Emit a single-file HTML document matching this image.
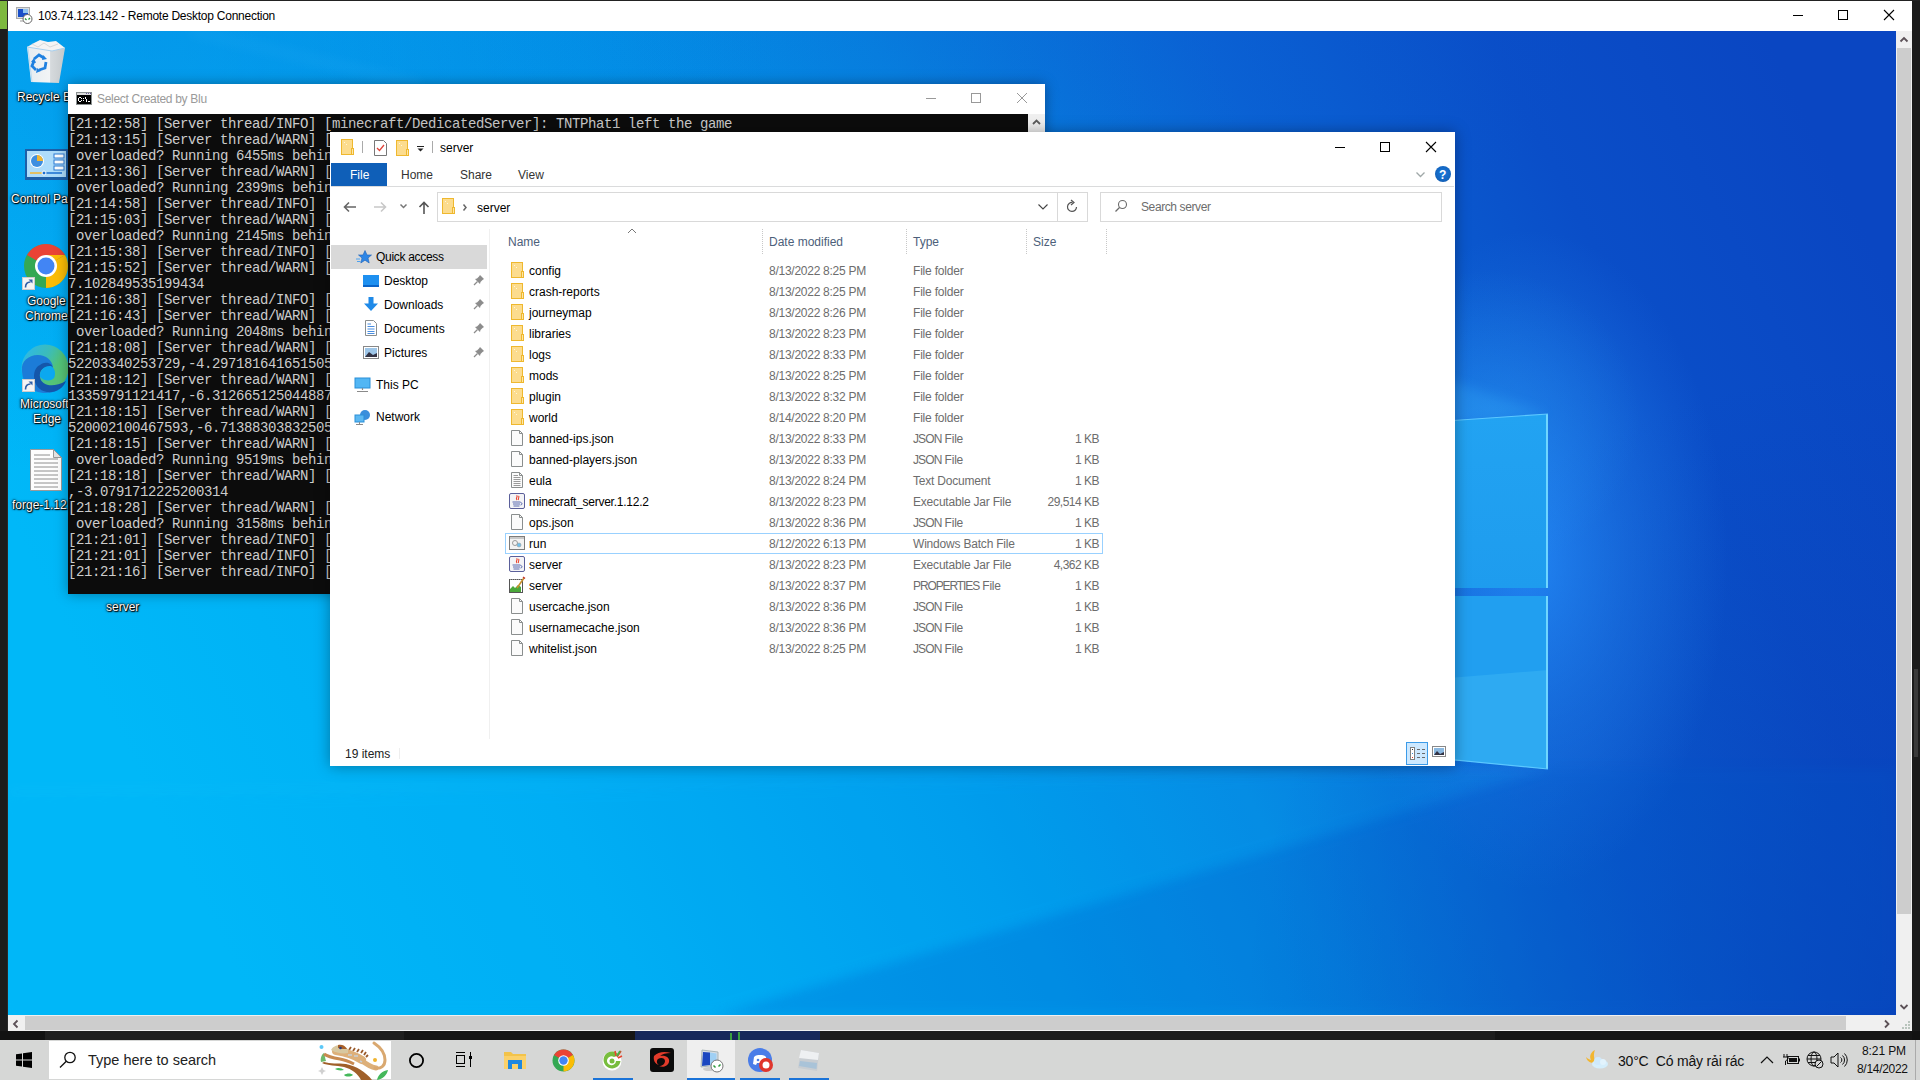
<!DOCTYPE html>
<html><head><meta charset="utf-8"><style>
*{margin:0;padding:0;box-sizing:border-box}
html,body{width:1920px;height:1080px;overflow:hidden}
body{position:relative;background:#1c1c1c;font-family:"Liberation Sans",sans-serif;color:#000}
.a{position:absolute}
.t{position:absolute;white-space:nowrap;line-height:1}
#wall{left:8px;top:31px;width:1888px;height:984px;overflow:hidden;background:#0a6ad8}
.con{font-family:"Liberation Mono",monospace;font-size:14px;letter-spacing:-.4px;color:#cccccc;line-height:16px;white-space:pre}
.row .t{font-size:12px}
.dlab{color:#fff;font-size:12px;text-shadow:1px 1px 1px #000,0 0 1px #000,0 0 2px #000,0 0 3px rgba(0,0,0,.7);text-align:center}

.row{left:0;width:1920px;height:21px}
.row .ic{position:absolute;left:511px;top:2px;overflow:visible}
.row .t{top:1px;line-height:21px;font-size:12px}
.row .nm{left:529px;color:#000}
.row .dt{left:769px;color:#6d6d6d;letter-spacing:-.26px}
.row .ty{left:913px;color:#6d6d6d;letter-spacing:-.2px}
.row .sz{left:1000px;width:99px;text-align:right;color:#6d6d6d;letter-spacing:-.5px}
</style></head><body>
<svg width="0" height="0" style="position:absolute">
<defs>
<g id="i-folder"><rect x="0.5" y="0.5" width="11" height="15" fill="#fcdc8e" stroke="#efb82e"/><rect x="10" y="9" width="3" height="7" fill="#efb82e"/><rect x="11" y="10" width="1" height="5" fill="#fde6a8"/><rect x="3" y="3" width="1" height="1" fill="#fff6d8"/><rect x="5" y="5" width="1" height="1" fill="#fff6d8"/></g>
<g id="i-file"><path d="M0.5 0.5H8.5L11.5 3.5V15.5H0.5Z" fill="#fbfbfb" stroke="#8a8e8e"/><path d="M8.5 0.5V3.5H11.5" fill="none" stroke="#8a8e8e"/></g>
<g id="i-txt"><path d="M0.5 0.5H8.5L11.5 3.5V15.5H0.5Z" fill="#fbfbfb" stroke="#8a8e8e"/><path d="M8.5 0.5V3.5H11.5" fill="none" stroke="#8a8e8e"/><path d="M2.5 3.5H7M2.5 5.5H9.5M2.5 7.5H9.5M2.5 9.5H9.5M2.5 11.5H9.5M2.5 13.5H9.5" stroke="#9a9a9a" stroke-width="1"/></g>
<g id="i-jar"><rect x="-1.5" y="0.5" width="15" height="15" rx="1.5" fill="#f4f4f6" stroke="#5a5f9a"/><path d="M5.5 2.5C7.5 3.5 4 5 6 7M7.5 3C9 4 6.5 5.5 7.5 7" stroke="#e8412c" fill="none" stroke-width="1.1"/><path d="M1.5 9H9.5M2 11H9M2.5 13H8.5M9.5 9.5C11.5 9.5 11.5 12 9.5 12" stroke="#5b6ab0" fill="none" stroke-width="1"/></g>
<g id="i-bat"><rect x="-1.5" y="1.5" width="15" height="13" fill="#f2f2f2" stroke="#7c7c7c"/><rect x="-1" y="2" width="14" height="2" fill="#c9c9c9"/><circle cx="4" cy="8" r="2.5" fill="none" stroke="#9a9a9a"/><circle cx="8" cy="10" r="2" fill="#6ec1ee" stroke="#9a9a9a" stroke-width=".6"/></g>
<g id="i-prop"><rect x="-1.5" y="2.5" width="13" height="13" fill="#fff" stroke="#555"/><path d="M-1 12L2 9L4 11L7 8L10 10V15H-1Z" fill="#4aa83a"/><path d="M-1 2.5H10" stroke="#999" stroke-dasharray="1 1"/><path d="M6 11L13 1" stroke="#c8902c" stroke-width="1.6"/><path d="M12 0L14 1.5" stroke="#c3342a" stroke-width="1.5"/></g>
</defs></svg>


<!-- host left strip -->
<div class="a" style="left:0;top:0;width:1920px;height:1px;background:#222"></div>
<div class="a" style="left:0;top:1px;width:7px;height:28px;background:#7db83e"></div>
<div class="a" style="left:7px;top:0;width:1px;height:1040px;background:#2a2a2a"></div>

<div class="a" style="left:1914px;top:669px;width:4px;height:88px;background:#3a3a3a"></div>
<!-- RDP title bar -->
<div class="a" style="left:8px;top:1px;width:1904px;height:30px;background:#fff"></div>
<div class="t" id="rdpt" style="left:38px;top:10px;font-size:12px;color:#000;letter-spacing:-.25px">103.74.123.142 - Remote Desktop Connection</div>

<!-- wallpaper -->
<div class="a" id="wall"><svg width="1888" height="984" viewBox="8 31 1888 984" style="position:absolute;left:0;top:0">
<defs>
<linearGradient id="wg" gradientUnits="userSpaceOnUse" x1="300" y1="1100" x2="1900" y2="300">
<stop offset="0" stop-color="#00b8f8"/>
<stop offset=".2" stop-color="#00aef4"/>
<stop offset=".4" stop-color="#009cec"/>
<stop offset=".55" stop-color="#0688e2"/>
<stop offset=".72" stop-color="#0a62d4"/>
<stop offset=".86" stop-color="#0a4ec8"/>
<stop offset="1" stop-color="#0a46c2"/>
</linearGradient>
<radialGradient id="topd" gradientUnits="userSpaceOnUse" cx="900" cy="0" r="700" gradientTransform="translate(900 0) scale(1 .55) translate(-900 0)">
<stop offset="0" stop-color="#0a5ad0" stop-opacity=".28"/>
<stop offset="1" stop-color="#0a5ad0" stop-opacity="0"/>
</radialGradient>
<radialGradient id="glow" gradientUnits="userSpaceOnUse" cx="1530" cy="560" r="330" gradientTransform="translate(1530 560) scale(.6 1) translate(-1530 -560)">
<stop offset="0" stop-color="#2a94ff" stop-opacity=".7"/>
<stop offset=".5" stop-color="#2a88f2" stop-opacity=".35"/>
<stop offset="1" stop-color="#2a86f0" stop-opacity="0"/>
</radialGradient>
<linearGradient id="pane1" x1="0" y1="0" x2="0" y2="1"><stop offset="0" stop-color="#22a3f2"/><stop offset="1" stop-color="#1e9cee"/></linearGradient>
<radialGradient id="brd" gradientUnits="userSpaceOnUse" cx="1896" cy="1015" r="650"><stop offset="0" stop-color="#0838b0" stop-opacity=".6"/><stop offset="1" stop-color="#0838b0" stop-opacity="0"/></radialGradient>
<radialGradient id="glow2" gradientUnits="userSpaceOnUse" cx="1490" cy="420" r="150"><stop offset="0" stop-color="#30b0ff" stop-opacity=".45"/><stop offset="1" stop-color="#30b0ff" stop-opacity="0"/></radialGradient>
<radialGradient id="tld" gradientUnits="userSpaceOnUse" cx="150" cy="31" r="450" gradientTransform="translate(150 31) scale(1.4 1) translate(-150 -31)"><stop offset="0" stop-color="#0a78dc" stop-opacity=".4"/><stop offset="1" stop-color="#0a78dc" stop-opacity="0"/></radialGradient>
<filter id="bl" x="-20%" y="-20%" width="140%" height="140%"><feGaussianBlur stdDeviation="6"/></filter>
</defs>
<rect x="8" y="31" width="1888" height="984" fill="url(#wg)"/>
<rect x="8" y="31" width="1888" height="984" fill="url(#topd)"/>
<rect x="8" y="31" width="1888" height="984" fill="url(#brd)"/>
<rect x="8" y="31" width="1888" height="984" fill="url(#tld)"/>
<path d="M190 31L420 84" stroke="#60c8ff" stroke-width="6" opacity=".12" filter="url(#bl)"/>
<rect x="8" y="31" width="1888" height="984" fill="url(#glow)"/>
<polygon points="1548,769 715,1015 1896,1015 1896,769" fill="#0058c8" opacity=".22" filter="url(#bl)"/>
<polygon points="1548,769 8,800 8,1015 715,1015" fill="#00b0f8" opacity=".12" filter="url(#bl)"/>
<path d="M1548 771L8 792" stroke="#70d8ff" stroke-width="3" opacity=".12" filter="url(#bl)"/>

<polygon points="1548,414 1300,330 1300,440" fill="#40c0ff" opacity=".22" filter="url(#bl)"/><rect x="1300" y="250" width="400" height="350" fill="url(#glow2)" opacity=".6"/>
<polygon points="1300,431 1548,414 1548,588 1300,588" fill="url(#pane1)"/>
<polygon points="1300,596 1548,596 1548,769 1300,745" fill="#219ff0"/>
<polygon points="1300,690 1548,670 1548,769 1300,745" fill="#2eaaf2"/>
<path d="M1547 414V588M1547 596V769" stroke="#6fd6ff" stroke-width="2"/><path d="M1300 431L1548 414" stroke="#5cc8ff" stroke-width="1.2"/><path d="M1300 745L1548 769" stroke="#5cc8ff" stroke-width="1.2"/>
</svg></div>
<!-- RDP title icon & buttons -->
<svg class="a" style="left:16px;top:7px" width="17" height="17">
 <rect x=".5" y=".5" width="13" height="11" fill="#d8dde2" stroke="#aaa"/>
 <rect x="2" y="2" width="10" height="8" fill="#1a4fc8"/><rect x="7" y="2" width="5" height="4" fill="#8fc4f0"/>
 <path d="M4 14H10" stroke="#bbb" stroke-width="1.5"/>
 <circle cx="11.5" cy="12" r="4.5" fill="#fff" stroke="#666"/>
 <path d="M9 11.5L10.5 13M14 11L12.5 12.5" stroke="#2a9a3a" stroke-width="1.3"/>
</svg>
<div class="a" style="left:1793px;top:15px;width:10px;height:1px;background:#000"></div>
<div class="a" style="left:1838px;top:10px;width:10px;height:10px;border:1px solid #000"></div>
<svg class="a" style="left:1883px;top:9px" width="12" height="12"><path d="M1 1L11 11M11 1L1 11" stroke="#000" stroke-width="1.1"/></svg>





<!-- desktop icons -->
<svg class="a" style="left:24px;top:38px" width="44" height="48">
 <defs><linearGradient id="rb" x1="0" x2="1"><stop offset="0" stop-color="#e6ecf0"/><stop offset=".6" stop-color="#f2f4f6"/><stop offset=".62" stop-color="#d6dadd"/><stop offset="1" stop-color="#c4c9cc"/></linearGradient></defs>
 <path d="M3 9L41 10L35 45L7 44Z" fill="url(#rb)"/>
 <path d="M3 9L10 5L16 2L24 4L32 3L41 10L28 13Z" fill="#f4f4f4"/>
 <path d="M8 6L14 9L20 5L26 9L34 6" stroke="#d8d8d8" fill="none"/>
 <path d="M3 9L28 13L41 10" stroke="#a8d0ee" fill="none" stroke-width="1"/>
 <path d="M4 10L8 44" stroke="#b0d4f0" stroke-width="1" opacity=".8"/>
 <g fill="none" stroke="#1f80e0" stroke-width="2.8" stroke-linecap="butt">
  <path d="M10 21L15 17L20 20"/>
  <path d="M22 24L21 30L15 32"/>
  <path d="M12 32L8 28L10 23"/>
 </g>
 <path d="M19 17L23 21L18 22Z M17 33L12 35L13 30Z M7 24L10 20L12 25Z" fill="#1f80e0"/>
</svg>
<div class="t dlab" style="left:17px;top:91px">Recycle Bin</div>
<svg class="a" style="left:25px;top:149px" width="43" height="31">
 <rect x="0" y="0" width="43" height="31" fill="#1d5fa8"/>
 <rect x="2" y="2" width="39" height="26" fill="#aedcfa"/>
 <circle cx="12" cy="12" r="7" fill="#fff"/><circle cx="12" cy="12" r="6" fill="#3f8fe0"/>
 <path d="M12 12V6A6 6 0 0 1 18 12Z" fill="#f2b632"/>
 <rect x="29" y="5" width="10" height="4" fill="#fff" stroke="#2a7ad4"/><rect x="29" y="11" width="10" height="4" fill="#fff" stroke="#2a7ad4"/><rect x="29" y="17" width="10" height="4" fill="#fff" stroke="#2a7ad4"/>
 <path d="M5 24H18" stroke="#f2b632" stroke-width="1.5"/><path d="M19 24H37" stroke="#1a6fd0" stroke-width="1.5"/><circle cx="19" cy="24" r="2" fill="#1a6fd0" stroke="#fff"/>
</svg>
<div class="t dlab" style="left:11px;top:193px">Control Panel</div>
<svg class="a" style="left:23px;top:243px" width="46" height="46">
 <circle cx="23" cy="23" r="22" fill="#34a853"/>
 <path d="M23 23L4 12A22 22 0 0 1 42 12Z" fill="#ea4335"/>
 <path d="M23 23L42 12A22 22 0 0 1 23 45Z" fill="#fbbc05"/>
 <path d="M23 23L42 12H23Z" fill="#fbbc05"/>
 <circle cx="23" cy="23" r="11" fill="#fff"/><circle cx="23" cy="23" r="8.5" fill="#4285f4"/>
</svg>
<svg class="a" style="left:22px;top:277px" width="13" height="13"><rect x=".5" y=".5" width="12" height="12" fill="#f4f4f4" stroke="#ccc"/><path d="M3.5 10.5C3.5 7 5.5 5 8.5 5" stroke="#2f5fa8" stroke-width="1.6" fill="none"/><path d="M6.5 2.5H10.5V6.5Z" fill="#2f5fa8"/></svg>
<div class="t dlab" style="left:27px;top:295px">Google</div>
<div class="t dlab" style="left:25px;top:310px">Chrome</div>
<svg class="a" style="left:18px;top:340px" width="52" height="56">
 <defs><linearGradient id="eg" x1="0" y1="0" x2="1" y2=".6"><stop offset="0" stop-color="#2ab8f2"/><stop offset=".5" stop-color="#3cbcb8"/><stop offset=".75" stop-color="#52c47a"/><stop offset="1" stop-color="#58c474"/></linearGradient></defs>
 <circle cx="27" cy="28" r="23.5" fill="url(#eg)"/>
 <path d="M4 30C3 22 10 15 20 15C28 15 34 20 35 27C28 22 19 25 18 34C17 44 26 51 40 50C31 55 17 54 10 46C6 42 4 36 4 30Z" fill="#1c7cd8"/>
 <path d="M22 25C27 21 34 23 35 28C27 25 21 30 22 37C23 45 34 49 48 41C45 49 37 53 29 52C21 51 16 44 16 36C16 31 18 27 22 25Z" fill="#1456aa"/>
 <path d="M22 37C21 31 26 25 33 26C37 28 38 34 36 38C34 41 27 42 22 37Z" fill="#0ba8f0"/>
</svg>
<svg class="a" style="left:22px;top:379px" width="13" height="13"><rect x=".5" y=".5" width="12" height="12" fill="#f4f4f4" stroke="#ccc"/><path d="M3.5 10.5C3.5 7 5.5 5 8.5 5" stroke="#2f5fa8" stroke-width="1.6" fill="none"/><path d="M6.5 2.5H10.5V6.5Z" fill="#2f5fa8"/></svg>
<div class="t dlab" style="left:20px;top:398px">Microsoft</div>
<div class="t dlab" style="left:33px;top:413px">Edge</div>
<svg class="a" style="left:30px;top:449px" width="33" height="43">
 <path d="M.5 .5H23.5L31.5 8.5V41.5H.5Z" fill="#fdfdfd" stroke="#9a9a9a"/>
 <path d="M23.5 .5V8.5H31.5Z" fill="#e4e4e4" stroke="#9a9a9a"/>
 <path d="M4 6H20M4 10H28M4 14H28M4 18H28M4 22H28M4 26H28M4 30H28M4 34H28M4 38H28" stroke="#8e8e8e" stroke-width="1"/>
</svg>
<div class="t dlab" style="left:12px;top:499px">forge-1.12.2</div>
<div class="t dlab" style="left:106px;top:601px">server</div>

<!-- console window -->
<div class="a" style="left:68px;top:84px;width:977px;height:510px;background:#0c0c0c;box-shadow:0 0 12px rgba(0,0,0,.35)"></div>
<div class="a" style="left:68px;top:84px;width:977px;height:30px;background:#fff"></div>
<svg class="a" style="left:76px;top:92px" width="16" height="13" shape-rendering="crispEdges"><rect x="0" y="0" width="16" height="13" fill="#8a9090"/><rect x="1" y="1" width="14" height="2" fill="#dcdcdc"/><rect x="10" y="1" width="1" height="1" fill="#6a5a9a"/><rect x="12" y="1" width="1" height="1" fill="#6a5a9a"/><rect x="14" y="1" width="1" height="1" fill="#6a5a9a"/><rect x="1" y="3" width="14" height="9" fill="#000"/>
<path d="M2 6h1v3h-1zM3 5h2v1h-2zM3 9h2v1h-2zM5 6h1v1h-1zM5 8h1v1h-1zM7 6h1v1h-1zM7 8h1v1h-1zM9 5h1v2h-1zM10 7h1v3h-1zM12 9h2v1h-2z" fill="#fff"/></svg>

<div class="t" style="left:97px;top:93px;font-size:12px;color:#9a9a9a;letter-spacing:-.3px">Select Created by Blu</div>
<div class="a" style="left:926px;top:98px;width:10px;height:1px;background:#999"></div>
<div class="a" style="left:971px;top:93px;width:10px;height:10px;border:1px solid #999"></div>
<svg class="a" style="left:1016px;top:92px" width="12" height="12"><path d="M1 1L11 11M11 1L1 11" stroke="#999" stroke-width="1"/></svg>
<div class="a con" style="left:68px;top:114px;width:960px;height:480px;overflow:hidden;padding-top:2px">[21:12:58] [Server thread/INFO] [minecraft/DedicatedServer]: TNTPhat1 left the game
[21:13:15] [Server thread/WARN] [
 overloaded? Running 6455ms behin
[21:13:36] [Server thread/WARN] [
 overloaded? Running 2399ms behin
[21:14:58] [Server thread/INFO] [
[21:15:03] [Server thread/WARN] [
 overloaded? Running 2145ms behin
[21:15:38] [Server thread/INFO] [
[21:15:52] [Server thread/WARN] [
7.102849535199434
[21:16:38] [Server thread/INFO] [
[21:16:43] [Server thread/WARN] [
 overloaded? Running 2048ms behin
[21:18:08] [Server thread/WARN] [
52203340253729,-4.297181641651505
[21:18:12] [Server thread/WARN] [
13359791121417,-6.312665125044887
[21:18:15] [Server thread/WARN] [
520002100467593,-6.71388303832505
[21:18:15] [Server thread/WARN] [
 overloaded? Running 9519ms behin
[21:18:18] [Server thread/WARN] [
,-3.0791712225200314
[21:18:28] [Server thread/WARN] [
 overloaded? Running 3158ms behin
[21:21:01] [Server thread/INFO] [
[21:21:01] [Server thread/INFO] [
[21:21:16] [Server thread/INFO] [</div>
<div class="a" style="left:1028px;top:114px;width:17px;height:480px;background:#f0f0f0"></div>
<svg class="a" style="left:1031px;top:117px" width="11" height="11"><path d="M2 7L5.5 3.5L9 7" stroke="#5c5c5c" stroke-width="1.8" fill="none"/></svg>

<!-- explorer window -->
<div class="a" id="exp" style="left:330px;top:132px;width:1125px;height:634px;background:#fff;box-shadow:0 0 14px rgba(0,0,0,.35)"></div>
<!-- qat -->
<svg class="a" style="left:341px;top:139px" width="14" height="17"><use href="#i-folder" transform="translate(0,0)"/></svg>
<div class="a" style="left:362px;top:141px;width:1px;height:12px;background:#aaa"></div>
<svg class="a" style="left:374px;top:140px" width="14" height="17"><path d="M0.5 0.5H9.5L12.5 3.5V15.5H0.5Z" fill="#fff" stroke="#777"/><path d="M3 8L5.5 10.5L10 5" stroke="#e0443a" stroke-width="1.3" fill="none"/></svg>
<svg class="a" style="left:396px;top:140px" width="14" height="17"><use href="#i-folder"/></svg>
<svg class="a" style="left:416px;top:145px" width="9" height="8"><path d="M1 1.5H8" stroke="#222" stroke-width="1"/><path d="M1.5 3.5H7.5L4.5 6.5Z" fill="#222"/></svg>
<div class="a" style="left:432px;top:141px;width:1px;height:12px;background:#aaa"></div>
<div class="t" style="left:440px;top:142px;font-size:12px">server</div>
<!-- title buttons -->
<div class="a" style="left:1335px;top:147px;width:10px;height:1px;background:#000"></div>
<div class="a" style="left:1380px;top:142px;width:10px;height:10px;border:1px solid #000"></div>
<svg class="a" style="left:1425px;top:141px" width="12" height="12"><path d="M1 1L11 11M11 1L1 11" stroke="#000" stroke-width="1.1"/></svg>
<!-- ribbon tabs -->
<div class="a" style="left:331px;top:163px;width:56px;height:23px;background:#0f5fb8"></div>
<div class="t" style="left:350px;top:169px;font-size:12px;color:#fff">File</div>
<div class="t" style="left:401px;top:169px;font-size:12px;color:#333">Home</div>
<div class="t" style="left:460px;top:169px;font-size:12px;color:#333">Share</div>
<div class="t" style="left:518px;top:169px;font-size:12px;color:#333">View</div>
<svg class="a" style="left:1415px;top:171px" width="12" height="8"><path d="M1.5 1.5L5.5 5.5L9.5 1.5" stroke="#a0a8a8" stroke-width="1.3" fill="none"/></svg>
<div class="a" style="left:1435px;top:166px;width:16px;height:16px;border-radius:50%;background:radial-gradient(circle at 50% 45%,#1a78dc 0,#1466c0 60%,#0c4c9c 100%)"></div>
<div class="t" style="left:1439px;top:168px;font:bold 12px 'Liberation Sans';color:#fff">?</div>
<div class="a" style="left:331px;top:186px;width:1123px;height:1px;background:#dadbdc"></div>
<!-- nav buttons -->
<svg class="a" style="left:342px;top:200px" width="16" height="14"><path d="M2.5 7H14M7 2.5L2.5 7L7 11.5" stroke="#666" stroke-width="1.6" fill="none"/></svg>
<svg class="a" style="left:372px;top:200px" width="16" height="14"><path d="M2 7H13.5M9 2.5L13.5 7L9 11.5" stroke="#c8c8c8" stroke-width="1.6" fill="none"/></svg>
<svg class="a" style="left:399px;top:203px" width="10" height="7"><path d="M1.5 1.5L4.5 4.5L7.5 1.5" stroke="#777" stroke-width="1.5" fill="none"/></svg>
<svg class="a" style="left:417px;top:200px" width="14" height="16"><path d="M7 2.5V14M2.5 7L7 2.5L11.5 7" stroke="#555" stroke-width="1.6" fill="none"/></svg>
<div class="a" style="left:437px;top:192px;width:651px;height:30px;border:1px solid #d9d9d9"></div>
<div class="a" style="left:1057px;top:192px;width:1px;height:30px;background:#d9d9d9"></div>
<svg class="a" style="left:442px;top:198px" width="14" height="17"><use href="#i-folder"/></svg>
<svg class="a" style="left:462px;top:203px" width="6" height="9"><path d="M1.5 1.5L4 4.5L1.5 7.5" stroke="#666" stroke-width="1.5" fill="none"/></svg>
<div class="t" style="left:477px;top:202px;font-size:12px">server</div>
<svg class="a" style="left:1037px;top:203px" width="12" height="8"><path d="M1.5 1.5L6 6L10.5 1.5" stroke="#444" fill="none" stroke-width="1.1"/></svg>
<svg class="a" style="left:1065px;top:199px" width="15" height="15"><path d="M11.5 8A4.5 4.5 0 1 1 7.5 3.5" stroke="#555" stroke-width="1.2" fill="none"/><path d="M6 1L9 3.5L6 6" stroke="#555" stroke-width="1.2" fill="none"/></svg>
<div class="a" style="left:1100px;top:192px;width:342px;height:30px;border:1px solid #d9d9d9"></div>
<svg class="a" style="left:1114px;top:199px" width="14" height="14"><circle cx="8.5" cy="5.5" r="4" stroke="#6a6a6a" fill="none" stroke-width="1.1"/><path d="M5.5 8.5L1.5 12.5" stroke="#6a6a6a" stroke-width="1.3"/></svg>
<div class="t" style="left:1141px;top:201px;font-size:12px;color:#6d6d6d;letter-spacing:-.4px">Search server</div>
<!-- nav pane -->
<div class="a" style="left:331px;top:245px;width:156px;height:24px;background:#d9d9d9"></div>
<div class="a" style="left:489px;top:229px;width:1px;height:510px;background:#f0f0f0"></div>
<svg class="a" style="left:356px;top:249px" width="16" height="16"><path d="M9 1.5L11 6H15.5L12 9L13.2 14L9 11.2L4.8 14L6 9L2.5 6H7Z" fill="#2e86e6" stroke="#1a5fb8" stroke-width=".6"/><path d="M0 10H4M1 12.5H4.5" stroke="#4da2f0" stroke-width="1"/></svg>
<div class="t" style="left:376px;top:251px;font-size:12px;letter-spacing:-.3px">Quick access</div>
<div class="a" style="left:363px;top:275px;width:16px;height:12px;background:#1e90f0;border-bottom:2px solid #0a64c8"></div>
<div class="t" style="left:384px;top:275px;font-size:12px">Desktop</div>
<svg class="a" style="left:363px;top:296px" width="16" height="16"><path d="M5.5 1H10.5V7.5H15L8 15L1 7.5H5.5Z" fill="#1f8ae8"/></svg>
<div class="t" style="left:384px;top:299px;font-size:12px">Downloads</div>
<svg class="a" style="left:365px;top:320px" width="13" height="16"><path d="M0.5 0.5H8.5L11.5 3.5V15.5H0.5Z" fill="#fff" stroke="#8a8e8e"/><path d="M2.5 4H6M2.5 6.5H9.5M2.5 9H9.5M2.5 11.5H9.5M2.5 13.5H9.5" stroke="#4a8ee0"/></svg>
<div class="t" style="left:384px;top:323px;font-size:12px">Documents</div>
<svg class="a" style="left:363px;top:346px" width="16" height="13"><rect x=".5" y=".5" width="15" height="12" fill="#fff" stroke="#888"/><rect x="2" y="2" width="12" height="9" fill="#9ec6e8"/><path d="M2 11L6 6L10 9L14 7V11Z" fill="#334"/></svg>
<div class="t" style="left:384px;top:347px;font-size:12px">Pictures</div>
<svg class="a" style="left:473px;top:274px" width="12" height="88"><g id="pin"><path d="M7 1L11 5L9.5 6L7.5 8L7 10L2 5L4 4.5L6 2.5Z" fill="#8c8c8c"/><path d="M4.5 7.5L1 11" stroke="#8c8c8c" stroke-width="1.2"/></g><use href="#pin" y="24"/><use href="#pin" y="48"/><use href="#pin" y="72"/></svg>
<svg class="a" style="left:354px;top:377px" width="18" height="16"><rect x="1" y="1" width="15" height="10" fill="#52b6f4" stroke="#2a8fd8"/><path d="M8.5 11V13M3 14.5H14" stroke="#8a8a8a" stroke-width="1.2"/></svg>
<div class="t" style="left:376px;top:379px;font-size:12px">This PC</div>
<svg class="a" style="left:354px;top:409px" width="18" height="16"><circle cx="11" cy="6" r="5" fill="#3a8fdc"/><rect x="1" y="6" width="9" height="7" fill="#5cb8f2" stroke="#2a8fd8"/><path d="M5.5 13V15M2 15.5H9" stroke="#8a8a8a"/></svg>
<div class="t" style="left:376px;top:411px;font-size:12px">Network</div>
<!-- column headers -->
<svg class="a" style="left:627px;top:228px" width="10" height="6"><path d="M1 5L5 1L9 5" stroke="#777" fill="none"/></svg>
<div class="t" style="left:508px;top:236px;font-size:12px;color:#4c607a">Name</div>
<div class="a" style="left:762px;top:229px;width:1px;height:25px;border-left:1px dotted #c8c8c8"></div>
<div class="t" style="left:769px;top:236px;font-size:12px;color:#4c607a">Date modified</div>
<div class="a" style="left:906px;top:229px;width:1px;height:25px;border-left:1px dotted #c8c8c8"></div>
<div class="t" style="left:913px;top:236px;font-size:12px;color:#4c607a">Type</div>
<div class="a" style="left:1026px;top:229px;width:1px;height:25px;border-left:1px dotted #c8c8c8"></div>
<div class="t" style="left:1033px;top:236px;font-size:12px;color:#4c607a">Size</div>
<div class="a" style="left:1106px;top:229px;width:1px;height:25px;border-left:1px dotted #c8c8c8"></div>
<!-- focus row -->
<div class="a" style="left:505px;top:533px;width:598px;height:21px;border:1px solid #99d1ff"></div>
<div class="a row" style="top:260px"><svg class="ic" width="16" height="16"><use href="#i-folder"/></svg><div class="t nm">config</div><div class="t dt">8/13/2022 8:25 PM</div><div class="t ty">File folder</div><div class="t sz"></div></div>
<div class="a row" style="top:281px"><svg class="ic" width="16" height="16"><use href="#i-folder"/></svg><div class="t nm">crash-reports</div><div class="t dt">8/13/2022 8:25 PM</div><div class="t ty">File folder</div><div class="t sz"></div></div>
<div class="a row" style="top:302px"><svg class="ic" width="16" height="16"><use href="#i-folder"/></svg><div class="t nm">journeymap</div><div class="t dt">8/13/2022 8:26 PM</div><div class="t ty">File folder</div><div class="t sz"></div></div>
<div class="a row" style="top:323px"><svg class="ic" width="16" height="16"><use href="#i-folder"/></svg><div class="t nm">libraries</div><div class="t dt">8/13/2022 8:23 PM</div><div class="t ty">File folder</div><div class="t sz"></div></div>
<div class="a row" style="top:344px"><svg class="ic" width="16" height="16"><use href="#i-folder"/></svg><div class="t nm">logs</div><div class="t dt">8/13/2022 8:33 PM</div><div class="t ty">File folder</div><div class="t sz"></div></div>
<div class="a row" style="top:365px"><svg class="ic" width="16" height="16"><use href="#i-folder"/></svg><div class="t nm">mods</div><div class="t dt">8/13/2022 8:25 PM</div><div class="t ty">File folder</div><div class="t sz"></div></div>
<div class="a row" style="top:386px"><svg class="ic" width="16" height="16"><use href="#i-folder"/></svg><div class="t nm">plugin</div><div class="t dt">8/13/2022 8:32 PM</div><div class="t ty">File folder</div><div class="t sz"></div></div>
<div class="a row" style="top:407px"><svg class="ic" width="16" height="16"><use href="#i-folder"/></svg><div class="t nm">world</div><div class="t dt">8/14/2022 8:20 PM</div><div class="t ty">File folder</div><div class="t sz"></div></div>
<div class="a row" style="top:428px"><svg class="ic" width="16" height="16"><use href="#i-file"/></svg><div class="t nm">banned-ips.json</div><div class="t dt">8/13/2022 8:33 PM</div><div class="t ty"><span style="letter-spacing:-.9px">JSON</span> File</div><div class="t sz">1 KB</div></div>
<div class="a row" style="top:449px"><svg class="ic" width="16" height="16"><use href="#i-file"/></svg><div class="t nm">banned-players.json</div><div class="t dt">8/13/2022 8:33 PM</div><div class="t ty"><span style="letter-spacing:-.9px">JSON</span> File</div><div class="t sz">1 KB</div></div>
<div class="a row" style="top:470px"><svg class="ic" width="16" height="16"><use href="#i-txt"/></svg><div class="t nm">eula</div><div class="t dt">8/13/2022 8:24 PM</div><div class="t ty">Text Document</div><div class="t sz">1 KB</div></div>
<div class="a row" style="top:491px"><svg class="ic" width="16" height="16"><use href="#i-jar"/></svg><div class="t nm" style="letter-spacing:-.25px">minecraft_server.1.12.2</div><div class="t dt">8/13/2022 8:23 PM</div><div class="t ty">Executable Jar File</div><div class="t sz">29,514 KB</div></div>
<div class="a row" style="top:512px"><svg class="ic" width="16" height="16"><use href="#i-file"/></svg><div class="t nm">ops.json</div><div class="t dt">8/13/2022 8:36 PM</div><div class="t ty"><span style="letter-spacing:-.9px">JSON</span> File</div><div class="t sz">1 KB</div></div>
<div class="a row" style="top:533px"><svg class="ic" width="16" height="16"><use href="#i-bat"/></svg><div class="t nm">run</div><div class="t dt">8/12/2022 6:13 PM</div><div class="t ty">Windows Batch File</div><div class="t sz">1 KB</div></div>
<div class="a row" style="top:554px"><svg class="ic" width="16" height="16"><use href="#i-jar"/></svg><div class="t nm">server</div><div class="t dt">8/13/2022 8:23 PM</div><div class="t ty">Executable Jar File</div><div class="t sz">4,362 KB</div></div>
<div class="a row" style="top:575px"><svg class="ic" width="16" height="16"><use href="#i-prop"/></svg><div class="t nm">server</div><div class="t dt">8/13/2022 8:37 PM</div><div class="t ty"><span style="letter-spacing:-1.1px">PROPERTIES</span> File</div><div class="t sz">1 KB</div></div>
<div class="a row" style="top:596px"><svg class="ic" width="16" height="16"><use href="#i-file"/></svg><div class="t nm">usercache.json</div><div class="t dt">8/13/2022 8:36 PM</div><div class="t ty"><span style="letter-spacing:-.9px">JSON</span> File</div><div class="t sz">1 KB</div></div>
<div class="a row" style="top:617px"><svg class="ic" width="16" height="16"><use href="#i-file"/></svg><div class="t nm">usernamecache.json</div><div class="t dt">8/13/2022 8:36 PM</div><div class="t ty"><span style="letter-spacing:-.9px">JSON</span> File</div><div class="t sz">1 KB</div></div>
<div class="a row" style="top:638px"><svg class="ic" width="16" height="16"><use href="#i-file"/></svg><div class="t nm">whitelist.json</div><div class="t dt">8/13/2022 8:25 PM</div><div class="t ty"><span style="letter-spacing:-.9px">JSON</span> File</div><div class="t sz">1 KB</div></div>
<!-- status bar -->
<div class="t" style="left:345px;top:748px;font-size:12px;color:#222">19 items</div>
<div class="a" style="left:399px;top:748px;width:1px;height:11px;background:#eee"></div>
<div class="a" style="left:1406px;top:742px;width:22px;height:23px;background:#cce8ff;border:1px solid #3c9be8"></div>
<svg class="a" style="left:1409px;top:746px" width="17" height="16"><rect x="1.5" y="1.5" width="4" height="12" fill="#fff" stroke="#808080"/><rect x="3" y="3" width="1" height="1" fill="#333"/><rect x="3" y="7" width="1" height="1" fill="#3a8ad8"/><rect x="3" y="11" width="1" height="1" fill="#e03a2a"/><path d="M8 3.5H11M13 3.5H16M8 7.5H11M13 7.5H16M8 11.5H11M13 11.5H16" stroke="#6a6a6a"/></svg>
<svg class="a" style="left:1432px;top:746px" width="14" height="12"><rect x=".5" y=".5" width="13" height="10" fill="#fff" stroke="#888"/><rect x="2" y="2" width="10" height="7" fill="#8ab8e0"/><path d="M2 9L5 5L8 8L12 6V9Z" fill="#334"/></svg>

<!-- vertical scrollbar -->
<div class="a" style="left:1896px;top:31px;width:16px;height:984px;background:#f0f0f0"></div>
<div class="a" style="left:1897px;top:48px;width:14px;height:866px;background:#cdcdcd"></div>
<!-- horizontal scrollbar -->
<div class="a" style="left:8px;top:1015px;width:1904px;height:16px;background:#f0f0f0"></div>
<div class="a" style="left:25px;top:1016px;width:1821px;height:14px;background:#cdcdcd"></div>
<!-- dark band -->
<div class="a" style="left:0;top:1031px;width:1920px;height:9px;background:#121212"></div>
<div class="a" style="left:45px;top:1031px;width:359px;height:9px;background:#1f1f1f"></div>
<div class="a" style="left:404px;top:1031px;width:231px;height:9px;background:#161616"></div>
<div class="a" style="left:635px;top:1031px;width:185px;height:9px;background:#17285a"></div>
<div class="a" style="left:730px;top:1033px;width:2px;height:7px;background:#3aa040"></div>
<div class="a" style="left:738px;top:1032px;width:2px;height:8px;background:#3aa040"></div>
<div class="a" style="left:820px;top:1031px;width:675px;height:9px;background:#1d1d1d"></div>
<div class="a" style="left:1495px;top:1031px;width:417px;height:9px;background:#151515"></div>

<!-- scrollbar arrows -->
<svg class="a" style="left:1898px;top:35px" width="12" height="10"><path d="M2.5 6.5L6 3L9.5 6.5" stroke="#5c5157" stroke-width="1.8" fill="none"/></svg>
<svg class="a" style="left:1898px;top:1002px" width="12" height="10"><path d="M2.5 3L6 6.5L9.5 3" stroke="#5c5157" stroke-width="1.8" fill="none"/></svg>
<svg class="a" style="left:11px;top:1018px" width="10" height="12"><path d="M6.5 2.5L3 6L6.5 9.5" stroke="#5c5157" stroke-width="1.8" fill="none"/></svg>
<svg class="a" style="left:1882px;top:1018px" width="10" height="12"><path d="M3 2.5L6.5 6L3 9.5" stroke="#5c5157" stroke-width="1.8" fill="none"/></svg>
<svg class="a" style="left:1900px;top:1020px" width="11" height="10"><path d="M8 1h2v2h-2zM5 4h2v2h-2zM8 4h2v2h-2zM2 7h2v2h-2zM5 7h2v2h-2zM8 7h2v2h-2z" fill="#b8c4bc"/></svg>
<!-- taskbar -->
<div class="a" id="taskbar" style="left:0;top:1040px;width:1920px;height:40px;background:#d6d7d6"></div>
<div class="a" style="left:49px;top:1041px;width:342px;height:38px;background:#fff"></div>
<div class="t" style="left:88px;top:1053px;font-size:14.5px;color:#222">Type here to search</div>
<!-- taskbar content -->
<svg class="a" style="left:16px;top:1052px" width="17" height="17"><path d="M0 2.2L6 1.4V7.5H0ZM7 1.3L16 0V7.5H7ZM0 8.5H6V14.6L0 13.8ZM7 8.5H16V16L7 14.7Z" fill="#000"/></svg>
<svg class="a" style="left:59px;top:1051px" width="18" height="18"><circle cx="11" cy="6.5" r="5.2" stroke="#111" stroke-width="1.3" fill="none"/><path d="M7.3 10.2L1 16.5" stroke="#111" stroke-width="1.3"/></svg>
<svg class="a" style="left:314px;top:1040px" width="77" height="40">
 <circle cx="7.5" cy="7" r="2" fill="#5cc8f8"/><circle cx="61" cy="20" r="2" fill="#f0b430"/>
 <path d="M8 27L9.5 30L12 31L9.5 32L8 35L6.5 32L4 31L6.5 30Z" fill="#d0d0d0"/>
 <path d="M47 40C44 34 38 29 30 27C22 25 14 26 8 23L10 22C16 24 24 23 32 24C42 26 52 32 58 40Z" fill="#a0602a"/>
 <path d="M21 29C24 27 28 28 30 30C26 31 23 30 21 29ZM30 35C33 33 37 33 39 35C36 37 32 37 30 35ZM63 40C64 35 68 31 74 30C73 35 69 39 63 40Z" fill="#44b85a"/>
 <path d="M7 22C6 18 8 14 10 13C11 16 11 18 12 21Z" fill="#6cba6c"/>
 <path d="M35 10L37 7M39 11L41 8M43 12L45 9M47 13L49 10M50 15L52 12M52 17L54 15" stroke="#9a5a2a" stroke-width="1.8"/>
 <path d="M10 14C14 17 20 18 26 19C32 20 36 22 40 24" stroke="#c88a50" stroke-width="3" fill="none"/>
 <path d="M22 11C30 12 40 15 48 20" stroke="#ddb07a" stroke-width="8" fill="none" stroke-linecap="round"/>
 <path d="M47 20C52 24 56 27 62 28" stroke="#ddb07a" stroke-width="5" fill="none" stroke-linecap="round"/>
 <path d="M61 28C67 29 71 26 71 20C71 13 66 7 60 3" stroke="#d9a870" stroke-width="3" fill="none" stroke-linecap="round"/>
 <path d="M17 10C19 6 23 5 28 5C31 6 33 8 34 10L34 13C29 14 22 13 17 10Z" fill="#d8c8a0"/>
 <path d="M24 5C27 4 31 5 33 9C30 9 27 9 24 8Z" fill="#a8602a"/>
 <circle cx="26.5" cy="8" r="1.3" fill="#2a3a7a"/>
 <path d="M34 15H38M40 16H44M46 21L48 22" stroke="#c8d0d8" stroke-width="1.5"/>
</svg>
<svg class="a" style="left:408px;top:1052px" width="17" height="17"><circle cx="8.5" cy="8.5" r="6.6" stroke="#000" stroke-width="1.8" fill="none"/></svg>
<svg class="a" style="left:455px;top:1052px" width="18" height="16"><path d="M1 .5H10M1 14.5H10" stroke="#000"/><rect x="1.5" y="3.5" width="8" height="8" fill="none" stroke="#000"/><path d="M15.5 0V15" stroke="#000"/><rect x="14" y="4" width="3" height="3" fill="#000"/></svg>
<svg class="a" style="left:504px;top:1051px" width="23" height="19"><path d="M0 1H7L9 3H22V18H0Z" fill="#f3c34a"/><rect x="0" y="5" width="22" height="13" fill="#fbd16a"/><path d="M4 18V9H18V18H14V13H8V18Z" fill="#1f88e0"/></svg>
<svg class="a" style="left:552px;top:1049px" width="23" height="23"><circle cx="11.5" cy="11.5" r="11" fill="#34a853"/><path d="M11.5 11.5L2 6A11 11 0 0 1 21 6Z" fill="#ea4335"/><path d="M11.5 11.5L21 6A11 11 0 0 1 11.5 22.5Z" fill="#fbbc05"/><circle cx="11.5" cy="11.5" r="5.3" fill="#fff"/><circle cx="11.5" cy="11.5" r="4.2" fill="#4285f4"/></svg>
<svg class="a" style="left:602px;top:1049px" width="22" height="22"><circle cx="10" cy="12" r="9.5" fill="#fff"/><path d="M17 6A8.5 8.5 0 1 0 18.5 12H14A4.5 4.5 0 1 1 12 8Z" fill="#78bd3e"/><circle cx="10" cy="12" r="2.5" fill="#78bd3e"/><path d="M13 2L14 7M19 2L15 8M20 7L16 9" stroke="#e8452e" stroke-width="1.6"/><path d="M18 2L15 7" stroke="#3fb24b" stroke-width="1.6"/></svg>
<svg class="a" style="left:650px;top:1048px" width="24" height="24"><rect x="0" y="0" width="24" height="24" rx="3" fill="#0b0b0b"/><path d="M4 8C8 4 14 3 21 5C16 5 12 6 10 8C16 7 20 10 19 14C18 18 13 20 9 18C12 18 15 16 15 13C15 10 11 9 8 11C6 13 7 16 9 17C5 16 3 12 4 8Z" fill="#e23b2a"/></svg>
<div class="a" style="left:687px;top:1040px;width:48px;height:38px;background:#efefef"></div>
<svg class="a" style="left:700px;top:1049px" width="24" height="24"><path d="M2 1L18 3V16L1 18Z" fill="#d6dde4" stroke="#9aa" stroke-width=".8"/><path d="M3 3L10 3.5V16L2 17Z" fill="#1a47c0"/><path d="M10 3.5L16.5 4.5V15L10 16Z" fill="#9fd0f4"/><ellipse cx="9" cy="20" rx="6" ry="2" fill="#ccc"/><circle cx="17" cy="17" r="6" fill="#fff" stroke="#777"/><path d="M13.5 16.5L15.5 18.5M20.5 15.5L18.5 17.5" stroke="#2a9a3a" stroke-width="1.5"/></svg>
<svg class="a" style="left:748px;top:1048px" width="26" height="26"><circle cx="12" cy="12" r="12" fill="#4a7de8"/><path d="M6 9C8 7 10 7 12 7C14 7 16 7 18 9L19 16L16 17L15 15H9L8 17L5 16Z" fill="#fff"/><circle cx="10" cy="12" r="1.3" fill="#4a7de8"/><circle cx="18" cy="17" r="7" fill="#e0362c"/><circle cx="18" cy="17" r="3.5" fill="#fff"/></svg>
<svg class="a" style="left:797px;top:1049px" width="24" height="23"><path d="M4 1L22 4L20 22L1 19Z" fill="#c8cdd2"/><path d="M4 1L22 4L21 11L2 9Z" fill="#eef0f2"/><path d="M3 12L20 14L19.5 20L2 17Z" fill="#a9c3d8"/></svg>
<div class="a" style="left:593px;top:1078px;width:40px;height:2px;background:#1a73d8"></div>
<div class="a" style="left:687px;top:1078px;width:48px;height:2px;background:#1a73d8"></div>
<div class="a" style="left:740px;top:1078px;width:40px;height:2px;background:#1a73d8"></div>
<div class="a" style="left:789px;top:1078px;width:40px;height:2px;background:#1a73d8"></div>
<!-- tray -->
<svg class="a" style="left:1586px;top:1049px" width="24" height="21"><path d="M9 1C5 3 3 7 5 11C2 10 1 9 0 8C1 13 6 15 11 13C8 11 7 6 9 1Z" fill="#f2b630"/><ellipse cx="14" cy="15" rx="8" ry="4.5" fill="#d5eefc"/><circle cx="12" cy="12" r="4" fill="#cfe9fb"/><circle cx="17" cy="13" r="3" fill="#e2f3fd"/></svg>
<div class="t" style="left:1618px;top:1054px;font-size:14px;color:#111;letter-spacing:-.2px">30°C &nbsp;Có mây rải rác</div>
<svg class="a" style="left:1760px;top:1055px" width="14" height="9"><path d="M1 8L7 2L13 8" stroke="#111" stroke-width="1.2" fill="none"/></svg>
<svg class="a" style="left:1782px;top:1053px" width="18" height="13"><path d="M2 1V4M5 1V4M1 4H6V6L3.5 8V12" stroke="#111" stroke-width="1" fill="none"/><rect x="5.5" y="3.5" width="11" height="7" fill="none" stroke="#111"/><rect x="7" y="5" width="8" height="4" fill="#111"/><rect x="16.5" y="5.5" width="1.5" height="3" fill="#111"/></svg>
<svg class="a" style="left:1806px;top:1051px" width="18" height="18"><circle cx="8" cy="8" r="7" stroke="#111" fill="none"/><ellipse cx="8" cy="8" rx="3" ry="7" stroke="#111" fill="none"/><path d="M1 8H15M2 4.5H14M2 11.5H12" stroke="#111"/><circle cx="13" cy="13" r="4" fill="#d9d9d9" stroke="#111"/><path d="M10.5 15.5L15.5 10.5" stroke="#111"/></svg>
<svg class="a" style="left:1830px;top:1052px" width="18" height="16"><path d="M1 5H4L8 1V15L4 11H1Z" stroke="#111" fill="none"/><path d="M10.5 5.5A3 3 0 0 1 10.5 10.5M12.5 3.5A6 6 0 0 1 12.5 12.5M14.5 1.5A9 9 0 0 1 14.5 14.5" stroke="#111" fill="none"/></svg>
<div class="t" style="left:1862px;top:1045px;font-size:12px;color:#111;letter-spacing:-.1px">8:21 PM</div>
<div class="t" style="left:1857px;top:1063px;font-size:12px;color:#111;letter-spacing:-.3px">8/14/2022</div>
<div class="a" style="left:1915px;top:1040px;width:1px;height:40px;background:#aaa"></div>


</body></html>
